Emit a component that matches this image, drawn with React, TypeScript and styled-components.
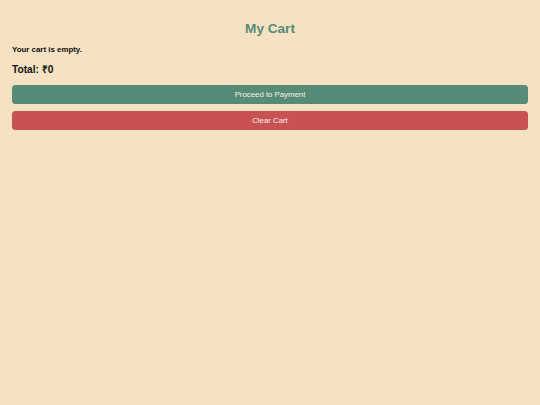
import React from "react";
import styled, { createGlobalStyle } from "styled-components";

const Global = createGlobalStyle`
  html, body {
    margin: 0;
    padding: 0;
    background: #f4e2c3;
  }
  body {
    font-family: "Liberation Sans", Arial, sans-serif;
    min-height: 100vh;
  }
`;

const Page = styled.div`
  display: flex;
  flex-direction: column;
  padding: 21px 12px 12px;
  min-height: 100vh;
  box-sizing: border-box;
  background: #f4e2c3;
`;

const Title = styled.h2`
  margin: 0;
  font-size: 13.6px;
  line-height: 16px;
  font-weight: 700;
  color: #568b77;
  text-align: center;
`;

const Empty = styled.p`
  margin: 7.5px 0 0;
  font-size: 7.9px;
  line-height: 9px;
  font-weight: 700;
  color: #111;
`;

const Total = styled.h3`
  margin: 10.5px 0 0;
  font-size: 10.2px;
  line-height: 12px;
  font-weight: 700;
  color: #111;
`;

const Actions = styled.div`
  display: flex;
  flex-direction: column;
  gap: 7px;
  margin-top: 8.5px;
`;

const Button = styled.button<{ $variant: "primary" | "danger" }>`
  width: 100%;
  height: 19px;
  border: none;
  border-radius: 3.5px;
  padding: 0;
  font-family: "Liberation Sans", Arial, sans-serif;
  font-size: 7.8px;
  color: #f5f0e8;
  cursor: pointer;
  background: ${(p) => (p.$variant === "primary" ? "#568b77" : "#c85253")};
`;

export default function App() {
  return (
    <>
      <Global />
      <Page>
        <Title>My Cart</Title>
        <Empty>Your cart is empty.</Empty>
        <Total>Total: ₹0</Total>
        <Actions>
          <Button $variant="primary">Proceed to Payment</Button>
          <Button $variant="danger">Clear Cart</Button>
        </Actions>
      </Page>
    </>
  );
}
